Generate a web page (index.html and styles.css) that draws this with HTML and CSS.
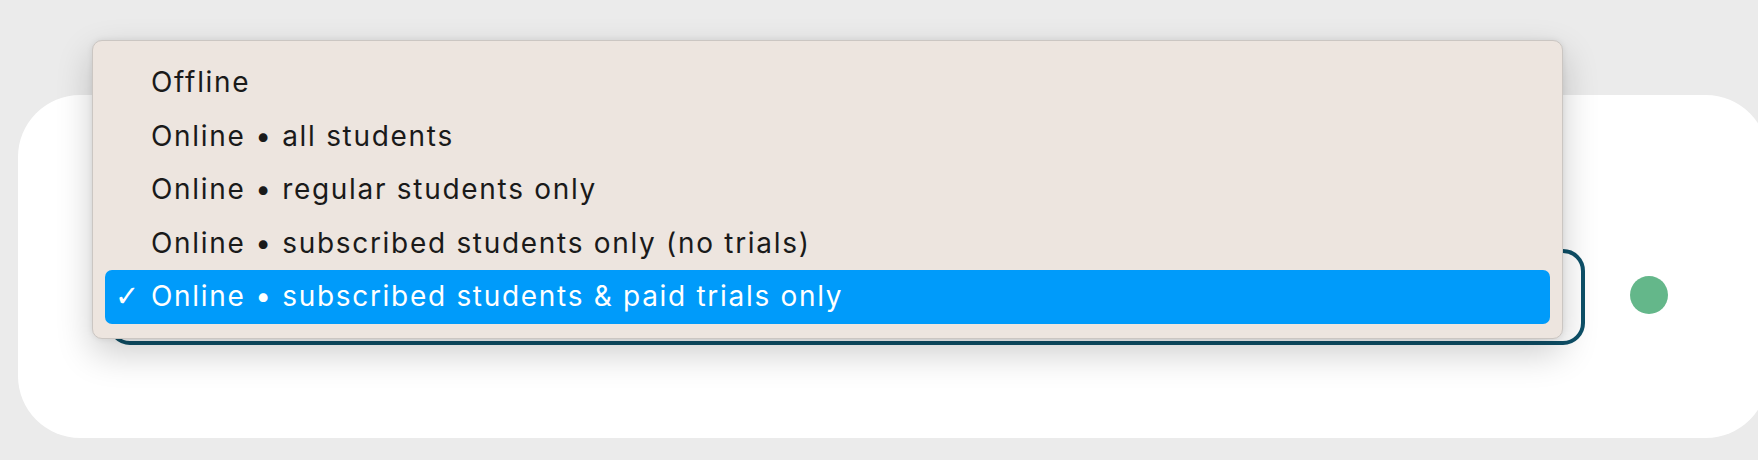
FILE: index.html
```html
<!DOCTYPE html>
<html lang="en">
<head>
    <meta charset="UTF-8">
    <meta name="viewport" content="width=device-width, initial-scale=1.0">
    <title>Availability</title>
    <link rel="stylesheet" href="styles.css">
</head>
<body>

    <div class="card">
        <div class="status-row">
            <div class="select-box">
                <!-- Open dropdown menu, covers the selected value -->
                <ul class="menu">
                    <li class="menu-item">Offline</li>
                    <li class="menu-item">Online • all students</li>
                    <li class="menu-item">Online • regular students only</li>
                    <li class="menu-item">Online • subscribed students only (no trials)</li>
                    <li class="menu-item selected"><span class="check">✓</span>Online • subscribed students &amp; paid trials only</li>
                </ul>
            </div>
            <span class="status-dot"></span>
        </div>
    </div>

</body>
</html>
```

FILE: styles.css
```css
body {
    margin: 0;
    padding: 0;
    background-color: #ebebeb;
    font-family: Inter, "Noto Sans", sans-serif;
    overflow: hidden;
    height: 460px;
}

.card {
    margin: 95px 0 0 18px;
    width: 1750px;
    height: 343px;
    box-sizing: border-box;
    background-color: #ffffff;
    border-radius: 62px;
    padding: 154px 0 0 90px;
}

.status-row {
    display: flex;
    align-items: center;
    gap: 45px;
}

.select-box {
    position: relative;
    width: 1477px;
    height: 96px;
    box-sizing: border-box;
    border: 4px solid #0e5068;
    border-radius: 22px;
}

.status-dot {
    width: 38px;
    height: 38px;
    border-radius: 50%;
    background-color: #64b78a;
    margin-top: -4px;
}

.menu {
    position: absolute;
    top: -213px;
    left: -20px;
    width: 1471px;
    margin: 0;
    padding: 15px 12px 14px;
    box-sizing: border-box;
    list-style: none;
    background-color: #ede5df;
    border: 1px solid #cbc6c2;
    border-radius: 10px;
    box-shadow: 0 14px 36px rgba(0, 0, 0, 0.2), 0 0 6px rgba(0, 0, 0, 0.08);
}

.menu-item {
    position: relative;
    height: 53.5px;
    line-height: 53.5px;
    padding-left: 46px;
    font-size: 28px;
    letter-spacing: 1.7px;
    color: #1a1a1a;
    border-radius: 7px;
}

.menu-item.selected {
    background-color: #009bfa;
    color: #ffffff;
}

.check {
    position: absolute;
    left: 10px;
    font-family: "DejaVu Sans", sans-serif;
    font-size: 29px;
    letter-spacing: 0;
}
```
